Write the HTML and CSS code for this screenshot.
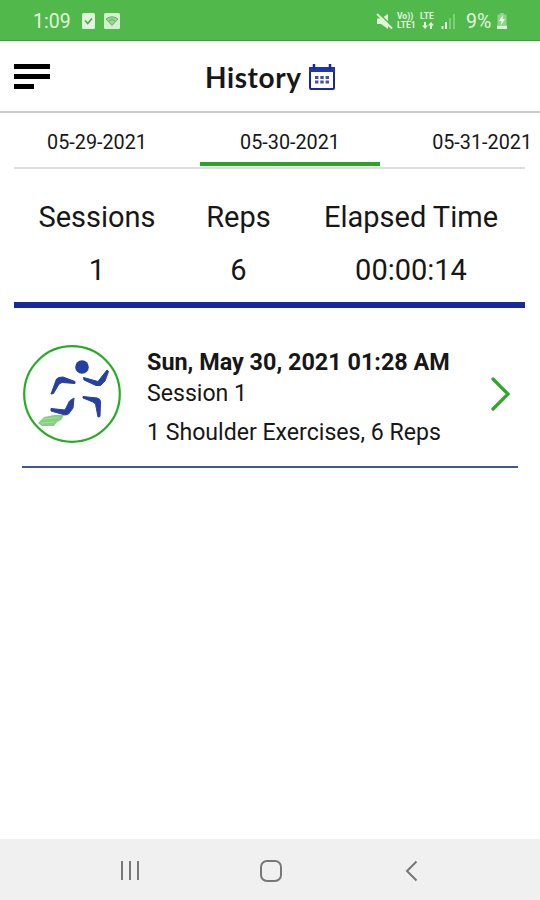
FILE: index.html
```html
<!DOCTYPE html>
<html lang="en">

<head>
    <meta charset="UTF-8">
    <meta name="viewport" content="width=device-width, initial-scale=1.0">
    <title>History</title>
    <link rel="stylesheet" href="styles.css">
</head>

<body>
    <div class="status-bar">
        <span class="clock">1:09</span>
        <svg class="status-check" width="13" height="16" viewBox="0 0 13 16">
            <rect width="13" height="16" rx="1.5" fill="#e0f5dc"/>
            <path d="M3 7.5l2.7 3L10 5.5" fill="none" stroke="#50a84d" stroke-width="1.7"/>
        </svg>
        <svg class="status-wifi" width="16" height="16" viewBox="0 0 16 16">
            <rect width="16" height="16" rx="1.5" fill="#d4f1cf"/>
            <path d="M2 6q6-4.500 12 0L8 12.500z" fill="#9bd196" stroke="#62b75e"/>
            <path d="M5 7.500q3-2 6 0" fill="none" stroke="#62b75e"/>
        </svg>
        <svg class="status-mute" width="17" height="17" viewBox="0 0 17 17">
            <path d="M1 5.500h4L12 1v15l-7-5H1z" fill="#e0f5dc"/>
            <path d="M2.500 0l14 13.500" stroke="#51b94c" stroke-width="1.500"/>
            <path d="M1 1l15 14.500" stroke="#e0f5dc" stroke-width="1.900"/>
        </svg>
        <div class="network">
            <span>Vo))</span><span>LTE</span>
            <span>LTE1</span>
            <svg width="12" height="7" viewBox="0 0 12 7">
                <path d="M3 0v4M9 7V3" stroke="#e0f5dc" stroke-width="2"/>
                <path d="M0 3.500h6L3 7zM6 3.500h6L9 0z" fill="#e0f5dc"/>
            </svg>
        </div>
        <svg class="status-signal" width="15" height="16" viewBox="0 0 15 16">
            <path d="M1.500 13v3M5 9v7" stroke="#e0f5dc" stroke-width="2"/>
            <path d="M9 5v11M13 1v15" stroke="#80cd7b" stroke-width="2"/>
        </svg>
        <span class="battery-text">9%</span>
        <svg class="status-battery" width="12" height="17" viewBox="0 0 12 17">
            <path d="M4 0h4v1.500h2.500V12h-9V1.500H4z" fill="#8fd48a"/>
            <path d="M6.800 2L3 8h2.500L5 12l4-6H6.500z" fill="#f0fbee"/>
            <path d="M1 12.500h10V16H1z" fill="#e0f5dc"/>
        </svg>
    </div>

    <header>
        <div class="menu"><span></span><span></span><span></span></div>
        <h1>History</h1>
        <svg class="calendar" width="26" height="26" viewBox="0 0 26 26">
            <rect x="1" y="4" width="24" height="21" rx="1" fill="#fff" stroke="#18299b" stroke-width="2"/>
            <path d="M0 3h26v5H0z" fill="#2237a5"/>
            <path d="M5 0v5M21 0v5" stroke="#18299b" stroke-width="2.500"/>
            <path d="M6 13.500h14M6 18h14" stroke="#4052a8" stroke-width="3" stroke-dasharray="3.400 1.900"/>
        </svg>
    </header>

    <nav class="tabs">
        <div class="tab">05-29-2021</div>
        <div class="tab active">05-30-2021</div>
        <div class="tab">05-31-2021</div>
    </nav>

    <section class="stats">
        <div class="stat"><span>Sessions</span><span>1</span></div>
        <div class="stat"><span>Reps</span><span>6</span></div>
        <div class="stat"><span>Elapsed Time</span><span>00:00:14</span></div>
    </section>

    <article class="session">
        <svg class="runner" width="98" height="98" viewBox="0 0 98 98">
            <circle cx="49" cy="49" r="47.800" fill="#fff" stroke="#27ad25" stroke-width="2.200"/>
            <path d="M15 78L21 72 31 70H41L38 75 34 77 31 81H19z" fill="#86d082"/>
            <path d="M20 74L36 72.500M18 78L32 77" stroke="#a5dda1"/>
            <circle cx="59" cy="22" r="6.800" fill="#263fa2"/>
            <g fill="#263fa2" stroke="#263fa2" stroke-linejoin="round">
                <path d="M28 49L33.500 34Q35 32 40 32L52 36.500V38.500L39 37.500 36 39 30.500 48.500z"/>
                <path d="M60.500 32.500L75 36.500 84 25 85.500 26.500 82 36 77.500 40.500 73 40.500 61 35z"/>
                <path d="M60 51.500L74 53Q77.500 53.500 77.500 57L77 71.500 75 72 72.500 59 70 57 60 53z"/>
                <path d="M51 53L50 63 45.500 69 42 70 28 66 28 63.500 42 65 46.500 56z"/>
            </g>
        </svg>
        <div class="session-info">
            <h2>Sun, May 30, 2021 01:28 AM</h2>
            <p class="session-name">Session 1</p>
            <p class="session-detail">1 Shoulder Exercises, 6 Reps</p>
        </div>
        <svg class="chevron" width="22" height="36" viewBox="0 0 22 36">
            <path d="M3 3l15 15L3 33" fill="none" stroke="#2ca82a" stroke-width="3.200" stroke-linecap="round"/>
        </svg>
    </article>

    <footer>
        <svg width="22" height="22" viewBox="0 0 22 22">
            <path d="M3 1v19M11 1v19M19 1v19" stroke="#777" stroke-width="2"/>
        </svg>
        <svg width="24" height="24" viewBox="0 0 24 24">
            <rect x="2" y="2" width="20" height="20" rx="6" fill="none" stroke="#777" stroke-width="2"/>
        </svg>
        <svg width="22" height="22" viewBox="0 0 22 22">
            <path d="M16.500 1.500L7 11l9.500 9.500" fill="none" stroke="#777" stroke-width="2"/>
        </svg>
    </footer>
</body>

</html>
```
FILE: styles.css
```css
* {
    box-sizing: border-box;
    margin: 0;
    padding: 0;
}

body {
    display: flex;
    flex-direction: column;
    height: 900px;
    background-color: #fff;
    color: #171717;
    font-family: Roboto, sans-serif;
    white-space: nowrap;
    overflow: hidden;
}

svg {
    display: block;
    flex-shrink: 0;
}

/* Phone status bar */
.status-bar {
    display: flex;
    align-items: center;
    height: 41px;
    padding-top: 2px;
    padding-left: 33px;
    background: #51b94c;
    border-bottom: 1px solid #36a52f;
    color: #e0f5dc;
    font-size: 19.5px;
}

.clock {
    width: 49px;
}

.status-wifi {
    margin-left: 9px;
}

.status-mute {
    margin-left: 256px;
}

.network {
    display: grid;
    grid-template-columns: 20px 16px;
    column-gap: 3px;
    align-items: center;
    width: 39px;
    margin-left: 4px;
    font-size: 8.5px;
    font-weight: 700;
    line-height: 9px;
}

.network svg {
    margin-left: 2px;
}

.status-signal {
    margin-left: 5px;
}

.battery-text {
    width: 25px;
    margin-left: 10px;
}

.status-battery {
    margin-left: 5px;
}

/* Title bar */
header {
    display: flex;
    align-items: center;
    height: 72px;
    padding-top: 1px;
    padding-left: 14px;
    border-bottom: 2px solid #cbcbcb;
}

.menu {
    display: flex;
    flex-direction: column;
    gap: 5px;
    width: 36px;
}

.menu span {
    height: 5px;
    background: #000;
}

.menu span:last-child {
    width: 20px;
}

header h1 {
    width: 98px;
    margin-left: 155px;
    font-family: Lato, sans-serif;
    font-size: 28px;
    font-weight: 700;
    letter-spacing: 0.6px;
}

.calendar {
    margin-left: 6px;
}

/* Date tabs */
.tabs {
    display: flex;
    gap: 13px;
    height: 56px;
    margin-right: 15px;
    margin-left: 14px;
    border-bottom: 2px solid #dedede;
}

.tab {
    flex: 0 0 180px;
    height: 53px;
    padding-top: 18px;
    font-size: 19.8px;
    line-height: 24px;
    text-align: center;
}

.tab:first-child {
    margin-left: -7px;
}

.tab:last-child {
    flex-basis: 139px;
    text-align: right;
}

.tab.active {
    border-bottom: 4px solid #27a625;
}

/* Daily totals */
.stats {
    display: grid;
    grid-template-columns: 166px 117px 228px;
    height: 139px;
    margin: 0 15px 0 14px;
    padding-top: 30px;
    border-bottom: 6px solid #18299b;
}

.stat {
    display: flex;
    flex-direction: column;
    gap: 17px;
    font-size: 29px;
    line-height: 36px;
    text-align: center;
}

/* Session row */
.session {
    display: flex;
    height: 160px;
    margin: 0 22px;
    padding-top: 37px;
    border-bottom: 2px solid #425696;
}

.runner {
    margin-left: 1px;
}

.session-info {
    width: 310px;
    margin-left: 26px;
}

.session-info h2 {
    margin-top: 2px;
    font-size: 23.4px;
    font-weight: 700;
    line-height: 30px;
}

.session-info p {
    font-size: 23.1px;
    line-height: 30px;
}

.session-info .session-name {
    margin-top: 2px;
}

.session-info .session-detail {
    margin-top: 9px;
}

.chevron {
    margin-top: 31px;
    margin-left: 33px;
}

/* Android navigation */
footer {
    display: flex;
    align-items: center;
    justify-content: space-between;
    height: 61px;
    margin-top: auto;
    padding: 2px 118px 0 119px;
    background: #f0f0f0;
}
```
